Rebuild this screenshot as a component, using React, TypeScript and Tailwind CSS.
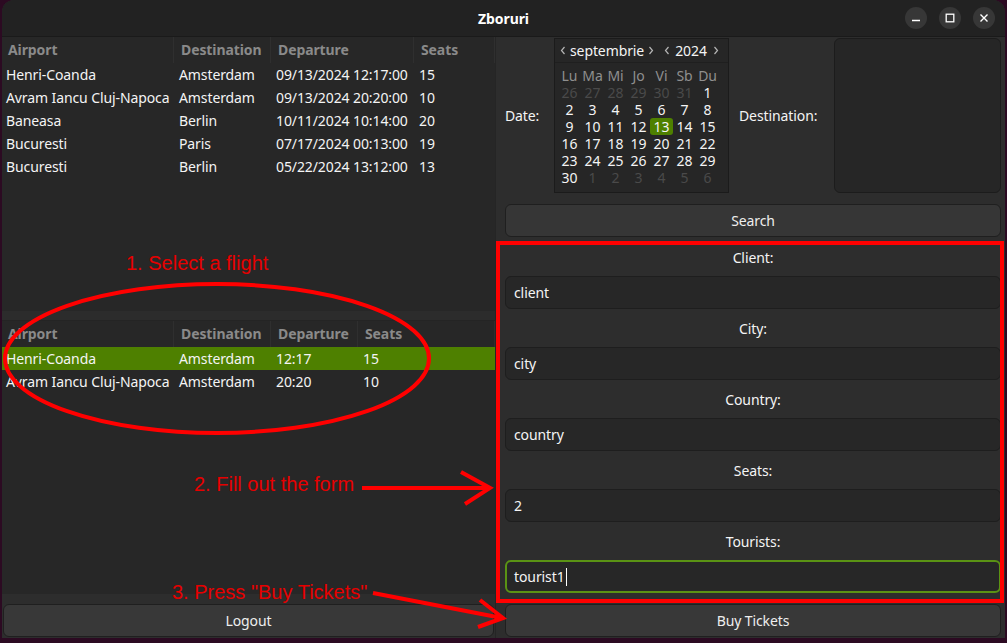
import React from 'react';

const flights = [
  ['Henri-Coanda', 'Amsterdam', '09/13/2024 12:17:00', '15'],
  ['Avram Iancu Cluj-Napoca', 'Amsterdam', '09/13/2024 20:20:00', '10'],
  ['Baneasa', 'Berlin', '10/11/2024 10:14:00', '20'],
  ['Bucuresti', 'Paris', '07/17/2024 00:13:00', '19'],
  ['Bucuresti', 'Berlin', '05/22/2024 13:12:00', '13'],
];

const selected = [
  ['Henri-Coanda', 'Amsterdam', '12:17', '15'],
  ['Avram Iancu Cluj-Napoca', 'Amsterdam', '20:20', '10'],
];

const weeks: [number, boolean][][] = [
  [[26, true], [27, true], [28, true], [29, true], [30, true], [31, true], [1, false]],
  [[2, false], [3, false], [4, false], [5, false], [6, false], [7, false], [8, false]],
  [[9, false], [10, false], [11, false], [12, false], [13, false], [14, false], [15, false]],
  [[16, false], [17, false], [18, false], [19, false], [20, false], [21, false], [22, false]],
  [[23, false], [24, false], [25, false], [26, false], [27, false], [28, false], [29, false]],
  [[30, false], [1, true], [2, true], [3, true], [4, true], [5, true], [6, true]],
];

function Chevron({ dir }: { dir: 'l' | 'r' }) {
  return (
    <svg width="6" height="9" viewBox="0 0 6 9" className="shrink-0">
      <path d={dir === 'l' ? 'M4.5 1 L1.5 4.5 L4.5 8' : 'M1.5 1 L4.5 4.5 L1.5 8'} fill="none" stroke="#b5b5b5" strokeWidth="1.2" />
    </svg>
  );
}

function Table({ rows, cols, highlight }: { rows: string[][]; cols: string; highlight?: number }) {
  const heads = ['Airport', 'Destination', 'Departure', 'Seats'];
  return (
    <div className="flex-1 bg-[#272727] flex flex-col">
      <div className={`grid ${cols} h-[26px] items-center`}>
        {heads.map((h, i) => (
          <div key={h} className={`h-full flex items-center pb-[1px] font-bold text-[#8a8a8a] ${i === 0 ? 'pl-[6px]' : 'pl-[7px]'} border-r border-[#2f2f2f]`}>
            {h}
          </div>
        ))}
      </div>
      {rows.map((r, ri) => (
        <div key={ri} className={`grid ${cols} h-[23px] items-center ${highlight === ri ? 'bg-[#4e8000]' : ''}`}>
          {r.map((c, i) => (
            <div key={i} className={`whitespace-nowrap ${i === 0 ? 'pl-[4px]' : 'pl-[5px]'}`}>{c}</div>
          ))}
        </div>
      ))}
    </div>
  );
}

function Field({ label, value, focused }: { label: string; value: string; focused?: boolean }) {
  return (
    <>
      <div className="h-[38px] flex items-center justify-center">{label}</div>
      <div className={`h-[33px] rounded-[6px] bg-[#272727] flex items-center ${focused ? 'border-2 border-[#5a9314] pl-[7px]' : 'border border-[#1e1e1e] pl-[8px]'}`}>
        {value}
        {focused && <span className="inline-block w-[1px] h-[18px] bg-white ml-[1px]" />}
      </div>
    </>
  );
}

export default function App() {
  return (
    <div className="relative w-[1007px] h-[643px] bg-[#2c0a22] overflow-hidden font-['Noto_Sans',sans-serif] text-[14px] tracking-[-0.1px] text-[#f4f4f4]">
      <div className="ml-[2px] w-[1003px] h-[638px] rounded-t-[12px] overflow-hidden flex flex-col bg-[#2d2d2d]">
        {/* title bar */}
        <div className="h-[37px] shrink-0 bg-[#222222] border-b border-[#1a1a1a] relative flex items-center justify-end pr-[10px] gap-[12px]">
          <div className="absolute inset-0 flex items-center justify-center font-bold text-white">Zboruri</div>
          <div className="relative w-[22px] h-[22px] rounded-full bg-[#373737] flex items-center justify-center">
            <svg width="10" height="10" viewBox="0 0 10 10"><path d="M1 7.5 H9" stroke="#fff" strokeWidth="1.4" /></svg>
          </div>
          <div className="relative w-[22px] h-[22px] rounded-full bg-[#373737] flex items-center justify-center">
            <svg width="10" height="10" viewBox="0 0 10 10"><rect x="1.2" y="1.2" width="7.6" height="7.6" fill="none" stroke="#fff" strokeWidth="1.3" /></svg>
          </div>
          <div className="relative w-[22px] h-[22px] rounded-full bg-[#373737] flex items-center justify-center">
            <svg width="10" height="10" viewBox="0 0 10 10"><path d="M1.5 1.5 L8.5 8.5 M8.5 1.5 L1.5 8.5" stroke="#fff" strokeWidth="1.4" /></svg>
          </div>
        </div>

        <div className="flex flex-1">
          {/* left pane */}
          <div className="w-[493px] flex flex-col">
            <div className="h-[274px] flex flex-col">
              <Table rows={flights} cols="grid-cols-[172px_97px_143px_81px]" />
            </div>
            <div className="h-[10px] bg-[#2c2c2c] border-b border-[#242424]" />
            <div className="h-[273px] flex flex-col">
              <Table rows={selected} cols="grid-cols-[172px_97px_87px_137px]" highlight={0} />
            </div>
            <div className="flex-1 pt-[10px] pb-[1px] px-[1px] flex">
              <button className="flex-1 rounded-[6px] bg-[#383838] border border-[#1f1f1f] text-[#eeeeee]">Logout</button>
            </div>
          </div>

          {/* right pane */}
          <div className="flex-1 flex flex-col pl-[9px] pr-[4px] pt-[1px] pb-[1px] border-l border-[#252525]">
            <div className="flex items-center h-[155px]">
              <div className="w-[49px]">Date:</div>
              <div className="w-[175px] h-full bg-[#262626] border border-[#1b1b1b] flex flex-col">
                <div className="h-[24px] flex items-center border-b border-[#1f1f1f] pl-[5px]">
                  <Chevron dir="l" />
                  <span className="ml-[4px]">septembrie</span>
                  <span className="ml-[4px]"><Chevron dir="r" /></span>
                  <span className="ml-[10px]"><Chevron dir="l" /></span>
                  <span className="ml-[5px]">2024</span>
                  <span className="ml-[6px]"><Chevron dir="r" /></span>
                </div>
                <div className="pl-[3px] pt-[4px]">
                  <div className="grid grid-cols-[repeat(7,23px)] h-[17px] items-center text-[#8f8f8f]">
                    {['Lu', 'Ma', 'Mi', 'Jo', 'Vi', 'Sb', 'Du'].map((d) => (
                      <div key={d} className="text-center leading-[17px]">{d}</div>
                    ))}
                  </div>
                  {weeks.map((w, wi) => (
                    <div key={wi} className="grid grid-cols-[repeat(7,23px)] h-[17px] items-center">
                      {w.map(([n, dim], di) => (
                        <div key={di} className="flex justify-center">
                          <span className={`leading-[17px] text-center ${dim ? 'text-[#4a4a4a]' : ''} ${n === 13 && !dim ? 'bg-[#4e8000] rounded-[3px] w-[23px]' : ''}`}>{n}</span>
                        </div>
                      ))}
                    </div>
                  ))}
                </div>
              </div>
              <div className="ml-[10px] w-[95px]">Destination:</div>
              <div className="flex-1 h-full bg-[#262626] border border-[#1c1c1c] rounded-[6px]" />
            </div>
            <button className="mt-[11px] mb-[1px] h-[33px] rounded-[6px] bg-[#363636] border border-[#1f1f1f] text-[#eeeeee]">Search</button>
            <Field label="Client:" value="client" />
            <Field label="City:" value="city" />
            <Field label="Country:" value="country" />
            <Field label="Seats:" value="2" />
            <Field label="Tourists:" value="tourist1" focused />
            <button className="mt-[11px] h-[33px] rounded-[6px] bg-[#383838] border border-[#1f1f1f] text-[#eeeeee]">Buy Tickets</button>
          </div>
        </div>
      </div>

      {/* annotations */}
      <div className="absolute left-[496px] top-[241px] w-[508px] h-[362px] border-4 border-[#ff0000] pointer-events-none" />
      <svg className="absolute inset-0 pointer-events-none" width="1007" height="643">
        <ellipse cx="217" cy="358.5" rx="212" ry="74.5" fill="none" stroke="#ff0000" strokeWidth="4" />
        <path d="M362 488 H489 M461 472 L490 488 L465 504" fill="none" stroke="#ff0000" strokeWidth="4" />
        <path d="M373 593 L502 618 M480 600 L503 618 L478 627" fill="none" stroke="#ff0000" strokeWidth="4" />
      </svg>
      <div className="absolute left-[126px] top-[251px] leading-[24px] text-[20px] tracking-normal text-[#e60000] font-['Liberation_Sans',Arial,sans-serif] whitespace-nowrap">1. Select a flight</div>
      <div className="absolute left-[194px] top-[472px] leading-[24px] text-[20px] tracking-normal text-[#e60000] font-['Liberation_Sans',Arial,sans-serif] whitespace-nowrap">2. Fill out the form</div>
      <div className="absolute left-[172px] top-[580px] leading-[24px] text-[20px] tracking-normal text-[#e60000] font-['Liberation_Sans',Arial,sans-serif] whitespace-nowrap">3. Press "Buy Tickets"</div>
    </div>
  );
}
